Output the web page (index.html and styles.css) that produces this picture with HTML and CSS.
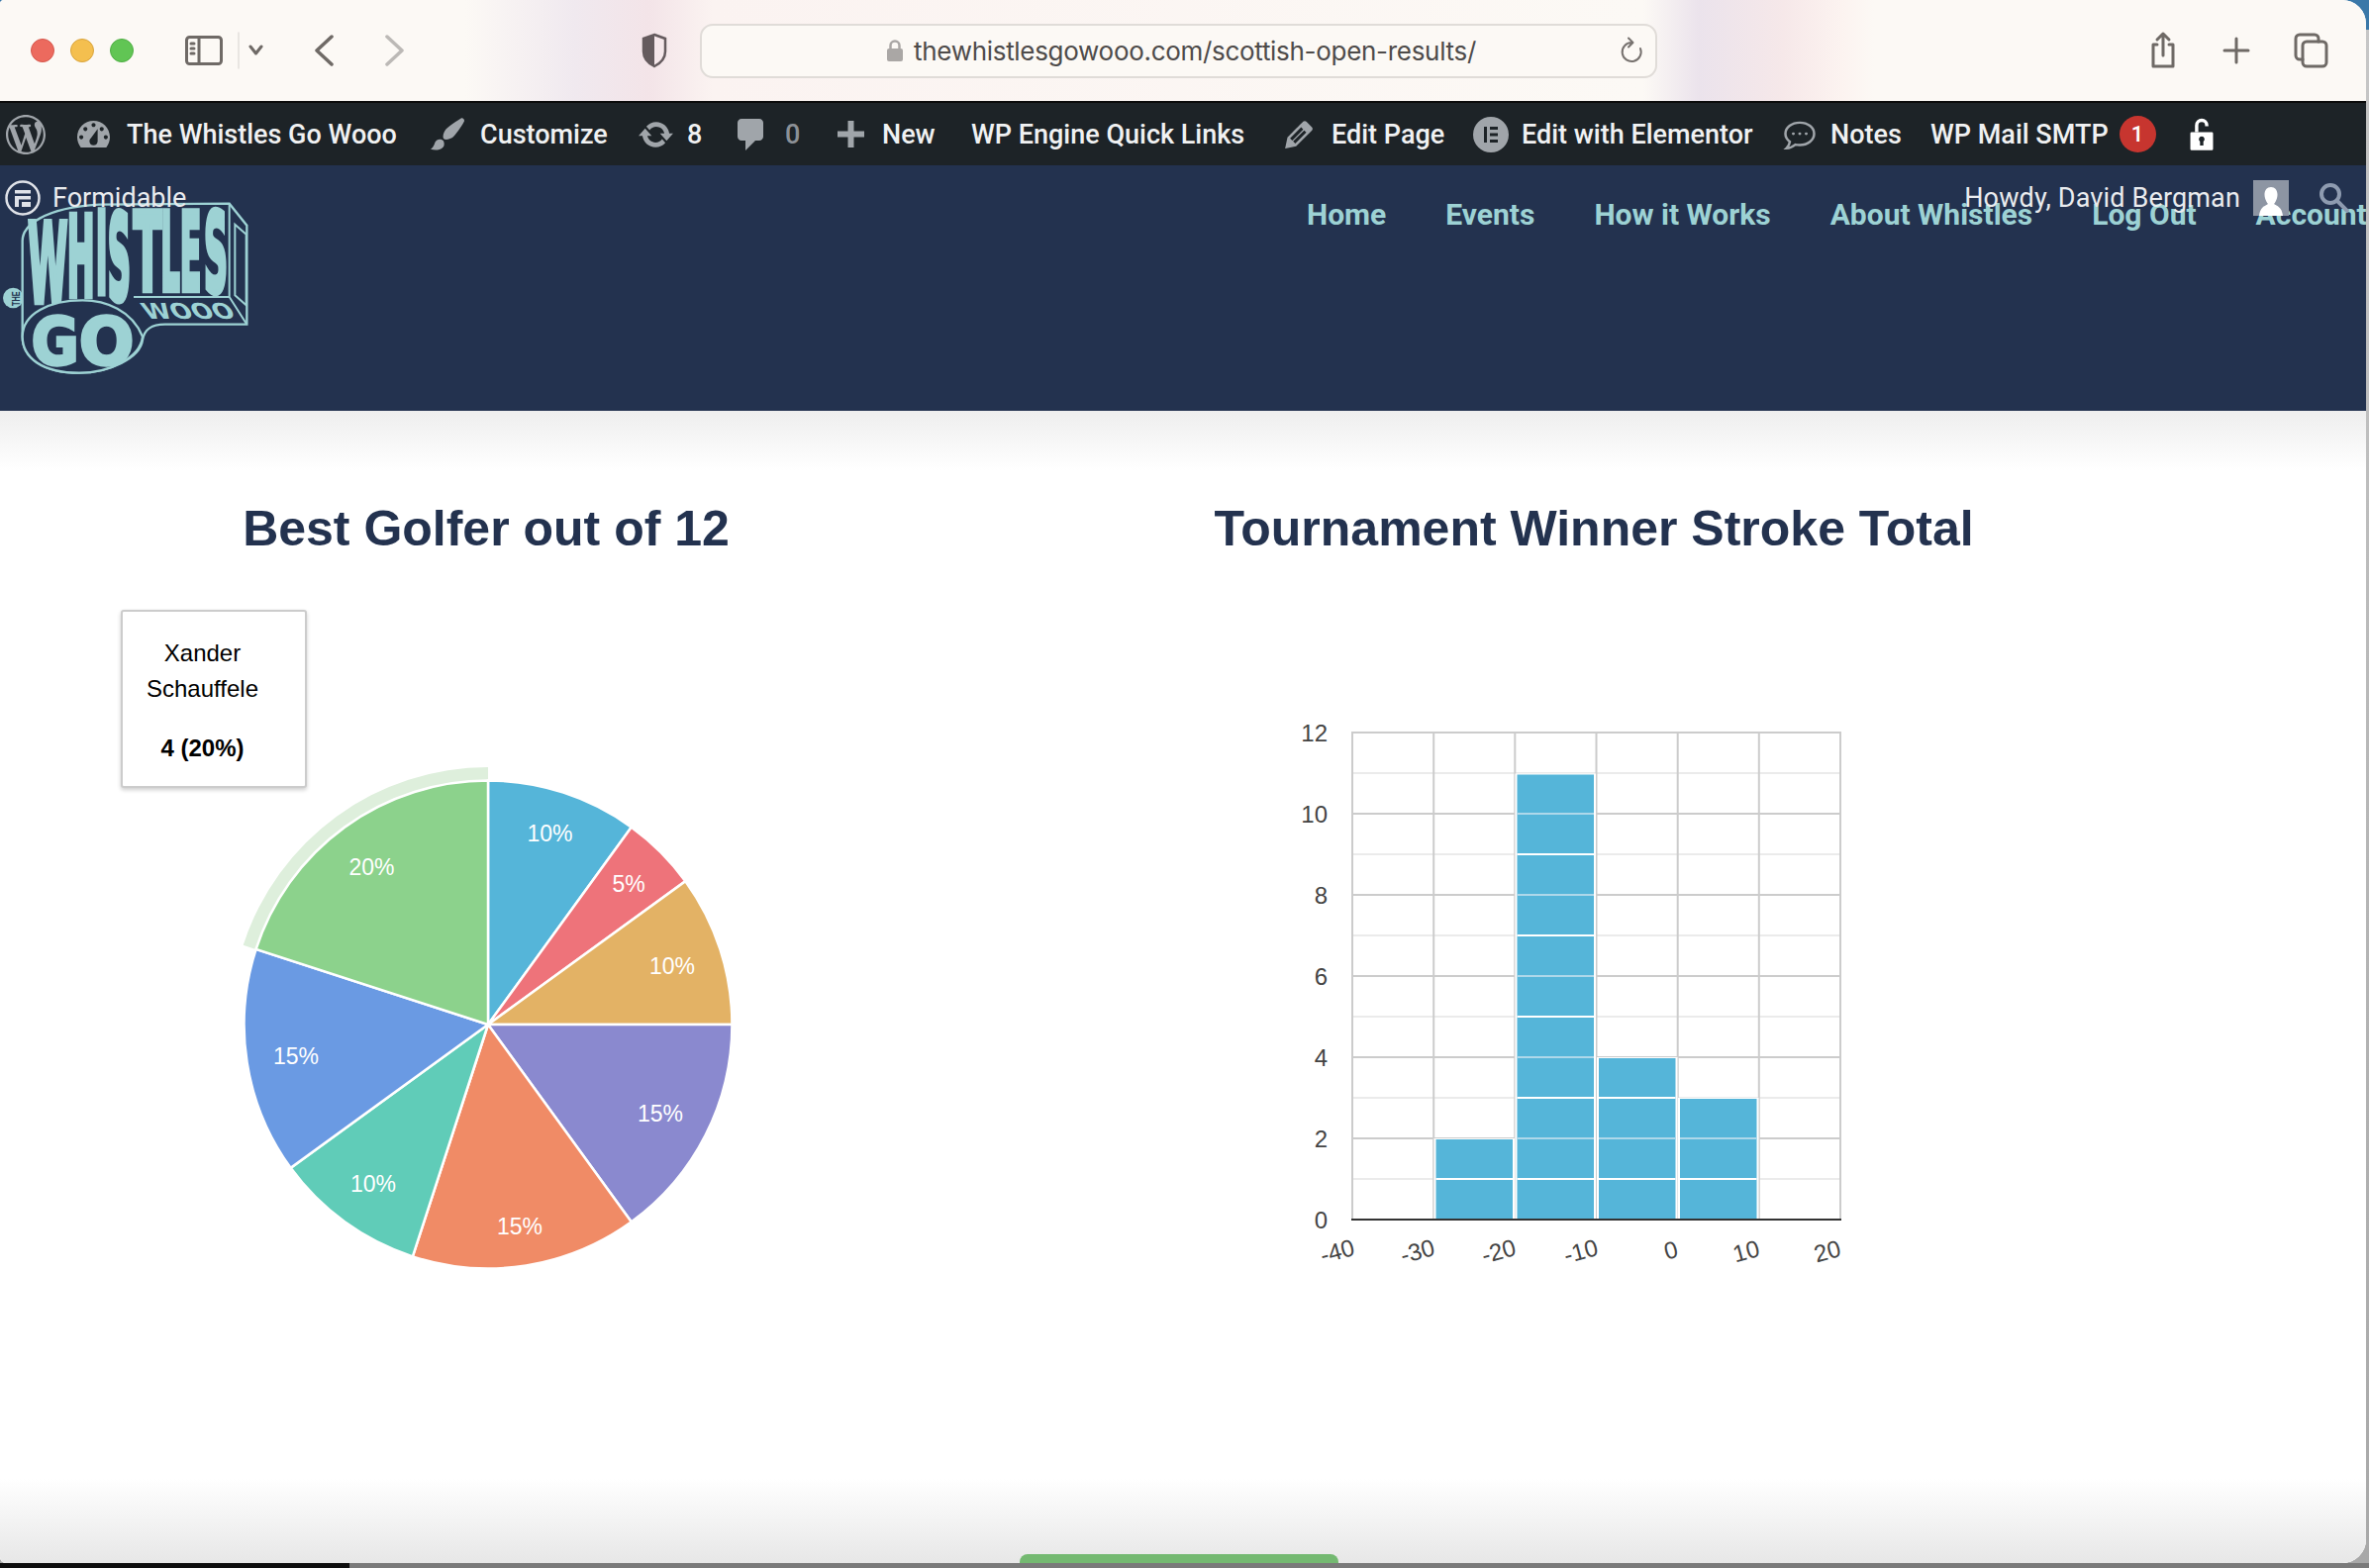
FILE: index.html
```html
<!DOCTYPE html>
<html lang="en">
<head>
<meta charset="utf-8">
<title>Scottish Open Results</title>
<link rel="stylesheet" href="styles.css">
</head>
<body>
<div class="window">
  <div class="browser-bar">
    <div class="lights"><span class="light red"></span><span class="light yellow"></span><span class="light green"></span></div>
    <svg class="tb-icon" width="38" height="30" viewBox="0 0 38 30"><rect x="1.500" y="1.500" width="35" height="27" rx="3"/><path d="M14 1.500v27M6 8h3M6 13h3M6 18h3"/></svg>
    <svg class="tb-icon" width="30" height="40" viewBox="0 0 30 40"><path class="tb-divider" d="M1 2v36"/><path d="M13 16l5.500 7 5.500-7"/></svg>
    <svg class="tb-icon bold" width="20" height="32" viewBox="0 0 20 32"><path d="M18 2L3 16l15 14"/></svg>
    <svg class="tb-icon bold faded" width="20" height="32" viewBox="0 0 20 32"><path d="M2 2l15 14L2 30"/></svg>
    <svg class="shield" width="28" height="36" viewBox="0 0 28 36"><path class="shield-line" d="M14 2l11 4v13c0 7-5 12-11 15C8 31 3 26 3 19V6z"/><path class="shield-fill" d="M14 2v32C8 31 3 26 3 19V6z"/></svg>
    <div class="url-bar">
      <svg class="url-lock" width="18" height="24" viewBox="0 0 18 24"><path class="lock-arc" d="M4.500 11V7a4.500 4.500 0 0 1 9 0v4"/><rect x="1" y="10" width="16" height="13" rx="2"/></svg>
      <span class="url-text">thewhistlesgowooo.com/scottish-open-results/</span>
      <svg class="tb-thin reload" width="24" height="28" viewBox="0 0 24 28"><path d="M20 12a9.500 9.500 0 1 1-9-6M8 1.500l4.500 4.500-4.500 4.500"/></svg>
    </div>
    <svg class="tb-icon" width="32" height="40" viewBox="0 0 32 40"><path d="M10 14H6v22h20V14h-4M16 25V3M10 9l6-6 6 6"/></svg>
    <svg class="tb-icon" width="30" height="30" viewBox="0 0 30 30"><path d="M15 3v24M3 15h24"/></svg>
    <svg class="tb-icon" width="36" height="36" viewBox="0 0 36 36"><rect x="10" y="9" width="24" height="25" rx="4"/><path d="M10 27H7a4 4 0 0 1-4-4V6a4 4 0 0 1 4-4h15a4 4 0 0 1 4 4v3"/></svg>
  </div>

  <nav class="admin-bar">
    <div class="ab-item"><svg class="ab-icon wp" viewBox="0 0 20 20"><path d="M20 10c0-5.510-4.490-10-10-10C4.480 0 0 4.490 0 10c0 5.520 4.480 10 10 10 5.510 0 10-4.480 10-10zM7.780 15.370L4.370 6.220c.55-.02 1.170-.08 1.170-.08.5-.06.44-1.130-.06-1.110 0 0-1.450.11-2.370.11-.18 0-.37 0-.58-.01C4.120 2.690 6.870 1.110 10 1.110c2.330 0 4.450.87 6.050 2.340-.68-.11-1.650.39-1.650 1.580 0 .74.45 1.360.9 2.100.35.61.55 1.360.55 2.460 0 1.490-1.400 5-1.400 5l-3.030-8.370c.54-.02.82-.17.82-.17.5-.05.44-1.250-.06-1.220 0 0-1.440.12-2.380.12-.87 0-2.330-.12-2.330-.12-.5-.03-.56 1.200-.06 1.220l.92.08 1.260 3.410zM17.410 10c.24-.64.74-1.870.43-4.250.7 1.290 1.050 2.710 1.050 4.250 0 3.290-1.730 6.240-4.400 7.780.97-2.590 1.940-5.200 2.920-7.780zM6.100 18.090C3.120 16.650 1.110 13.530 1.110 10c0-1.300.23-2.480.72-3.590C3.250 10.300 4.670 14.200 6.100 18.090zm4.030-6.630l2.580 6.980c-.86.29-1.760.45-2.710.45-.79 0-1.570-.11-2.290-.33.81-2.380 1.620-4.740 2.420-7.100z"/></svg></div>
    <div class="ab-item"><svg class="ab-icon i-dash" viewBox="2 3 16 13"><path fill-rule="evenodd" d="M3.760 16h12.480c1.100-1.370 1.760-3.110 1.760-5 0-4.420-3.580-8-8-8s-8 3.580-8 8c0 1.890.66 3.630 1.760 5zM10 4c.55 0 1 .45 1 1s-.45 1-1 1-1-.45-1-1 .45-1 1-1zM6 6c.55 0 1 .45 1 1s-.45 1-1 1-1-.45-1-1 .45-1 1-1zm8 0c.55 0 1 .45 1 1s-.45 1-1 1-1-.45-1-1 .45-1 1-1zm-5.370 5.550L12 7v6c0 1.100-.9 2-2 2s-2-.9-2-2c0-.57.24-1.080.63-1.450zM4 10c.55 0 1 .45 1 1s-.45 1-1 1-1-.45-1-1 .45-1 1-1zm12 0c.55 0 1 .45 1 1s-.45 1-1 1-1-.45-1-1 .45-1 1-1z"/></svg><span>The Whistles Go Wooo</span></div>
    <div class="ab-item"><svg class="ab-icon i-brush" viewBox="1.400 1.800 17 16.400"><path d="M18.330 3.570s.27-.8-.31-1.360c-.53-.52-1.220-.24-1.220-.24-.61.3-5.760 3.470-7.670 5.570-.86.96-2.060 3.790-1.090 4.820.92.98 3.960-.17 4.790-1 2.060-2.060 5.210-7.170 5.500-7.790zM1.400 17.650c2.370-1.560 1.460-3.410 3.230-4.640.93-.65 2.220-.62 3.080.29.63.67.8 2.570-.16 3.460-1.570 1.450-4 1.550-6.150.89z"/></svg><span>Customize</span></div>
    <div class="ab-item"><svg class="ab-icon i-update" viewBox="0.800 3.200 18.400 13.600"><path d="M10.200 3.280c3.530 0 6.430 2.610 6.920 6h2.080l-3.500 4-3.500-4h2.320c-.45-1.970-2.210-3.440-4.320-3.440-1.450 0-2.730.71-3.540 1.780L4.950 5.660C6.230 4.200 8.110 3.280 10.200 3.280zm-.4 13.440c-3.520 0-6.430-2.610-6.920-6H.8l3.500-4c1.170 1.330 2.330 2.670 3.500 4H5.480c.45 1.970 2.210 3.440 4.320 3.440 1.450 0 2.730-.71 3.540-1.780l1.710 1.950c-1.280 1.460-3.150 2.390-5.250 2.390z"/></svg><span>8</span></div>
    <div class="ab-item"><svg class="ab-icon i-comment" viewBox="3 2 13 16"><path d="M5 2h9c1.100 0 2 .9 2 2v7c0 1.100-.9 2-2 2h-2l-5 5v-5H5c-1.100 0-2-.9-2-2V4c0-1.100.9-2 2-2z"/></svg><span class="muted">0</span></div>
    <div class="ab-item"><svg class="ab-icon i-plus" viewBox="0 0 27 27"><path d="M10.500 0h6v10.500H27v6H16.500V27h-6V16.500H0v-6h10.500z"/></svg><span>New</span></div>
    <div class="ab-item"><span>WP Engine Quick Links</span></div>
    <div class="ab-item"><svg class="ab-icon i-pencil" viewBox="3 2.900 14 14"><path fill-rule="evenodd" d="M13.890 3.390l2.710 2.720c.46.46.42 1.240.03 1.640l-8.010 8.020-5.560 1.160 1.160-5.580s7.600-7.630 7.990-8.030c.39-.39 1.220-.39 1.680.07zm-2.730 2.790l-5.590 5.610 1.110 1.110 5.540-5.650zm-2.970 8.230l5.580-5.600-1.070-1.080-5.590 5.600z"/></svg><span>Edit Page</span></div>
    <div class="ab-item"><svg class="ab-icon i-elementor" viewBox="0 0 36 36"><path fill-rule="evenodd" d="M18 0a18 18 0 1 1 0 36a18 18 0 0 1 0-36zM11 10v16h3V10zM17 10v3h8v-3zM17 16.500v3h8v-3zM17 23v3h8v-3z"/></svg><span>Edit with Elementor</span></div>
    <div class="ab-item"><svg class="ab-line" viewBox="0 0 34 32" preserveAspectRatio="none"><path d="M17 3C9 3 2.500 8 2.500 15c0 3.500 1.700 6.500 4.500 8.700-.3 2.500-1.500 5-3.500 7 3.500-.3 6.800-2 9-4 1.400.3 2.900.5 4.500.5 8 0 14.500-5.200 14.500-12.200S25 3 17 3z"/><circle class="dot" cx="10.500" cy="15" r="1.500"/><circle class="dot" cx="17" cy="15" r="1.500"/><circle class="dot" cx="23.500" cy="15" r="1.500"/></svg><span>Notes</span></div>
    <div class="ab-item"><span>WP Mail SMTP</span><span class="badge">1</span></div>
    <div class="ab-item"><svg class="ab-lock" viewBox="0 0 28 40"><path class="shackle" d="M8 17V9a6 6 0 0 1 12 0v1"/><path fill-rule="evenodd" d="M2 17h24a1.500 1.500 0 0 1 1.500 1.500V37a1.500 1.500 0 0 1-1.500 1.500H2A1.500 1.500 0 0 1 .5 37V18.500A1.500 1.500 0 0 1 2 17zM14 22a3.500 3.500 0 0 0-2 6.300V33h4v-4.700A3.500 3.500 0 0 0 14 22z"/></svg></div>
  </nav>

  <header class="site-header">
    <svg class="logo" width="300" height="240" viewBox="0 0 900 720">
      <circle class="logo-solid" cx="40" cy="408" r="31"/>
      <text class="logo-the" transform="translate(60 432) rotate(-90) scale(1 1.5)">THE</text>
      <path class="logo-frame" d="M68 465V235C68 190 130 135 300 125L695 122L748 188V488H500C455 488 437 505 432 535C425 590 330 635 240 635C130 635 68 590 68 525Z"/>
      <g class="logo-letters">
        <text transform="translate(85 419) scale(1.09 3.33)">W</text>
        <text transform="translate(203 401) scale(1 3.36)">H</text>
        <text transform="translate(290 394) scale(.95 3.4)">I</text>
        <text transform="translate(326 411) scale(.97 3.6)">S</text>
        <text transform="translate(404 384) scale(1.25 3.26)">T</text>
        <text transform="translate(487 384) scale(.92 3.26)">L</text>
        <text transform="translate(545 384) scale(.95 3.26)">E</text>
        <text transform="translate(618 387) scale(1 3.3)">S</text>
      </g>
      <path class="logo-detail" d="M695 122V405H405M695 405L748 488M712 185L746 215V430L712 400Z"/>
      <path class="logo-oval" d="M68 525C68 455 150 415 250 415C320 415 400 445 432 525C425 590 330 635 240 635C130 635 68 590 68 525Z"/>
      <g class="logo-heavy">
        <text transform="translate(95 610) scale(1.75 2)">G</text>
        <text transform="translate(240 610) scale(1.95 2)">O</text>
      </g>
      <text class="logo-wooo" transform="matrix(2.5 0 1.1 2.2 445 470)">WOOO</text>
    </svg>
    <div class="site-nav">
      <a>Home</a><a>Events</a><a>How it Works</a><a>About Whistles</a><a>Log Out</a><a>Account</a>
    </div>
    <div class="ab-left">
      <svg class="formidable-icon" width="36" height="36" viewBox="0 0 36 36"><circle cx="18" cy="18" r="16.500"/><path class="f-mark" d="M10 10h16v3.500H10zM10 16h16v3.500H14V27h-4zM17 22h9v5h-9z"/></svg>
      <span>Formidable</span>
    </div>
    <div class="ab-right">
      <span>Howdy, David Bergman</span>
      <svg class="avatar" width="36" height="36" viewBox="0 0 36 36"><rect width="36" height="36"/><path class="avatar-person" d="M18 7c4 0 6.500 3 6.500 7.500S22 23 21 24c3 2 8 3 9 12H6c1-9 6-10 9-12-1-1-3.500-5-3.500-9.500S14 7 18 7z"/></svg>
      <svg class="search" width="30" height="30" viewBox="0 0 30 30"><circle cx="11" cy="11" r="9"/><path d="M17.500 17.500L29 29"/></svg>
    </div>
  </header>

  <main class="content">
    <section class="chart-col pie-col">
      <h2>Best Golfer out of 12</h2>
      <svg class="chart-svg" width="982" height="700" viewBox="0 600 982 700">
        <path class="ring" d="M493 775A260 260 0 0 0 245.700 954.700L258 958.900A246 246 0 0 1 493 789Z"/>
        <g class="slices" transform="translate(493 1035) scale(1.006) translate(-493 -1035)">
          <path class="s1" d="M493 1035V790A245 245 0 0 1 637 836.800Z"/>
          <path class="s2" d="M493 1035L637 836.800A245 245 0 0 1 691.200 891Z"/>
          <path class="s3" d="M493 1035L691.200 891A245 245 0 0 1 738 1035Z"/>
          <path class="s4" d="M493 1035H738A245 245 0 0 1 637 1233.200Z"/>
          <path class="s5" d="M493 1035L637 1233.200A245 245 0 0 1 417.300 1268Z"/>
          <path class="s6" d="M493 1035L417.300 1268A245 245 0 0 1 294.800 1179Z"/>
          <path class="s7" d="M493 1035L294.800 1179A245 245 0 0 1 260 959.300Z"/>
          <path class="s8" d="M493 1035L260 959.300A245 245 0 0 1 493 790Z"/>
        </g>
        <g class="pie-labels">
          <text x="555.500" y="850">10%</text>
          <text x="635" y="901">5%</text>
          <text x="679" y="984">10%</text>
          <text x="667" y="1133">15%</text>
          <text x="525" y="1247">15%</text>
          <text x="377" y="1204">10%</text>
          <text x="299" y="1075">15%</text>
          <text x="375.500" y="884">20%</text>
        </g>
      </svg>
      <div class="tooltip">
        <div>Xander Schauffele</div>
        <div class="tooltip-value">4 (20%)</div>
      </div>
    </section>
    <section class="chart-col hist-col">
      <h2>Tournament Winner Stroke Total</h2>
      <svg class="chart-svg" width="978" height="700" viewBox="1121 600 978 700">
        <defs>
          <clipPath id="bars">
            <rect x="1450.500" y="1151" width="77.500" height="80"/>
            <rect x="1532.500" y="782.500" width="77.500" height="448.500"/>
            <rect x="1615" y="1069" width="77.500" height="162"/>
            <rect x="1697" y="1110" width="77.500" height="121"/>
          </clipPath>
        </defs>
        <path class="grid-minor" d="M1366 781H1859M1366 863H1859M1366 945H1859M1366 1027H1859M1366 1109H1859M1366 1191H1859"/>
        <path class="grid-major" d="M1366 740H1859M1366 822H1859M1366 904H1859M1366 986H1859M1366 1068H1859M1366 1150H1859M1366 739V1232M1448.200 739V1232M1530.300 739V1232M1612.500 739V1232M1694.700 739V1232M1776.800 739V1232M1859 739V1232"/>
        <g class="bars">
          <rect x="1448.500" y="1150" width="81.500" height="82"/>
          <rect x="1530.500" y="781.500" width="81.500" height="450.500"/>
          <rect x="1613" y="1068" width="81.500" height="164"/>
          <rect x="1695" y="1109" width="81.500" height="123"/>
        </g>
        <g class="bar-fill" clip-path="url(#bars)">
          <rect x="1440" y="770" width="360" height="470"/>
          <path class="bar-major" d="M1440 822H1800M1440 904H1800M1440 986H1800M1440 1068H1800M1440 1150H1800"/>
          <path class="bar-minor" d="M1440 863H1800M1440 945H1800M1440 1027H1800M1440 1109H1800M1440 1191H1800"/>
        </g>
        <path class="baseline" d="M1365 1232H1860"/>
        <g class="y-labels">
          <text x="1341" y="749">12</text>
          <text x="1341" y="831">10</text>
          <text x="1341" y="913">8</text>
          <text x="1341" y="995">6</text>
          <text x="1341" y="1077">4</text>
          <text x="1341" y="1159">2</text>
          <text x="1341" y="1241">0</text>
        </g>
        <g class="x-labels">
          <text transform="translate(1353 1272) rotate(-15)">-40</text>
          <text transform="translate(1434 1272) rotate(-15)">-30</text>
          <text transform="translate(1516 1272) rotate(-15)">-20</text>
          <text transform="translate(1599 1272) rotate(-15)">-10</text>
          <text transform="translate(1690 1271) rotate(-15)">0</text>
          <text transform="translate(1766 1272) rotate(-15)">10</text>
          <text transform="translate(1848 1272) rotate(-15)">20</text>
        </g>
      </svg>
    </section>
    <div class="green-tab"></div>
  </main>
</div>
<div class="dock-strip"><div class="dock-black"></div></div>
</body>
</html>
```
FILE: styles.css
```css
* { box-sizing: border-box; }
html, body { margin: 0; padding: 0; }
body {
  width: 2393px;
  height: 1584px;
  overflow: hidden;
  font-family: "Liberation Sans", Arial, sans-serif;
  background: linear-gradient(#3a78a8 0, #3a78a8 30px, #c6c6c6 30px, #a8a8a8 1579px);
}
.window {
  width: 2390px;
  height: 1579px;
  display: flex;
  flex-direction: column;
  overflow: hidden;
  border-radius: 4px 24px 24px 6px;
  background: #fff;
}

/* browser chrome */
.browser-bar {
  flex: 0 0 104px;
  display: grid;
  grid-template-columns: 156px 53px 77px 72px 258px 60px 1462px 75px 72px auto;
  align-items: center;
  padding-left: 31px;
  border-bottom: 2px solid #0b0b0b;
  background: linear-gradient(90deg, #fcf9f5 0, #fcf9f5 470px, #f0e9ef 580px, #f3e4e8 655px, #fbf3f1 720px, #fcf9f5 1660px, #ebe3ec 1716px, #f6e8e9 1802px, #fcf3f0 1860px, #fcf9f5 1893px);
}
.lights { display: flex; gap: 16px; }
.light { width: 24px; height: 24px; border-radius: 50%; }
.red { background: #ec6a5e; border: 1px solid #d6574c; }
.yellow { background: #f4bf4f; border: 1px solid #d9a43c; }
.green { background: #61c554; border: 1px solid #4fae44; }
.tb-icon, .tb-thin { fill: none; stroke: #6f6a66; stroke-width: 3; stroke-linecap: round; stroke-linejoin: round; }
.tb-icon.bold { stroke-width: 3.500; }
.tb-icon.faded { stroke: #bcb9b6; }
.tb-divider { stroke: #e3dfdb; stroke-width: 1.500; }
.shield-line { fill: none; stroke: #655b5e; stroke-width: 2.500; }
.shield-fill { fill: #655b5e; }
.url-bar {
  height: 55px;
  width: 967px;
  display: flex;
  align-items: center;
  gap: 10px;
  padding: 0 11px 0 186px;
  border: 2px solid #e0dcd8;
  border-radius: 13px;
  background: #fcf9f5;
}
.url-lock rect { fill: #aaa7a5; }
.lock-arc { fill: none; stroke: #aaa7a5; stroke-width: 2.500; }
.url-text { font: 26px Inter, "Liberation Sans", sans-serif; color: #4e4b4a; letter-spacing: -0.3px; white-space: nowrap; }
.reload { margin-left: auto; stroke-width: 2; stroke: #77726f; }

/* WordPress admin bar */
.admin-bar {
  flex: 0 0 63px;
  display: grid;
  grid-template-columns: 72px 357px 210px 100px 101px 135px 317px 190px 313px 149px 262px auto;
  align-items: center;
  padding-left: 6px;
  background: #1d2327;
  color: #f0f1f2;
  font: 500 27px Roboto, "Liberation Sans", sans-serif;
}
.ab-item { display: flex; align-items: center; white-space: nowrap; }
.ab-icon { fill: #a0a5aa; flex: none; }
.ab-icon.wp { width: 40px; height: 40px; }
.i-dash { width: 33px; height: 27px; margin-right: 17px; }
.i-brush { width: 34px; height: 33px; margin-right: 16px; }
.i-update { width: 35px; height: 26px; margin-right: 14px; }
.i-comment { width: 26px; height: 32px; margin-right: 22px; }
.i-plus { width: 27px; height: 27px; margin-right: 18px; }
.i-pencil { width: 28px; height: 28px; margin-right: 19px; }
.i-elementor { width: 36px; height: 36px; margin-right: 13px; }
.ab-line { width: 34px; height: 30px; margin-right: 14px; fill: none; stroke: #a0a5aa; stroke-width: 2.500; flex: none; }
.dot { fill: #a0a5aa; stroke: none; }
.muted { color: #8c9197; }
.badge {
  width: 37px;
  height: 37px;
  margin-left: 11px;
  border-radius: 50%;
  background: #c7352f;
  color: #fff;
  font-size: 22px;
  display: flex;
  align-items: center;
  justify-content: center;
}
.ab-lock { width: 24px; height: 34px; fill: #fff; }
.shackle { fill: none; stroke: #fff; stroke-width: 4; }

/* site header */
.site-header {
  flex: 0 0 248px;
  position: relative;
  display: grid;
  grid-template-columns: 1320px 1fr;
  background: #23324f;
  overflow: hidden;
}
.logo { margin-top: -2px; display: block; }
.logo-solid { fill: #9dd2d4; }
.logo-the { fill: #23324f; font: 700 22px "Liberation Sans", sans-serif; }
.logo-frame { fill: #23324f; stroke: #9dd2d4; stroke-width: 7; }
.logo-letters text { fill: #9dd2d4; stroke: #9dd2d4; stroke-width: 6; font: 700 100px "DejaVu Sans", sans-serif; }
.logo-detail { fill: none; stroke: #9dd2d4; stroke-width: 6; }
.logo-oval { fill: #23324f; stroke: #9dd2d4; stroke-width: 7; }
.logo-heavy text { fill: #9dd2d4; stroke: #9dd2d4; stroke-width: 5; font: 700 100px "DejaVu Sans", sans-serif; }
.logo-wooo { fill: #9dd2d4; font: 700 30px "DejaVu Sans", sans-serif; }
.site-nav {
  display: flex;
  gap: 60px;
  padding-top: 32px;
  color: #9dd2d4;
  font: 700 30px Roboto, "Liberation Sans", sans-serif;
  white-space: nowrap;
}
.ab-left, .ab-right {
  position: absolute;
  display: flex;
  align-items: center;
  color: #e9ebee;
  font: 27px Roboto, "Liberation Sans", sans-serif;
  white-space: nowrap;
}
.ab-left { left: 5px; top: 15px; gap: 12px; }
.ab-right { right: 17px; top: 15px; letter-spacing: .15px; }
.ab-right span { margin-right: 13px; }
.formidable-icon circle { fill: none; stroke: #dfe2e8; stroke-width: 2.500; }
.f-mark { fill: #dfe2e8; }
.avatar { margin-right: 31px; }
.avatar rect { fill: #8d95a3; }
.avatar-person { fill: #fff; }
.search { fill: none; stroke: #8e9bb0; stroke-width: 4; }

/* content */
.content {
  flex: 1;
  position: relative;
  display: grid;
  grid-template-columns: 982px 978px;
  column-gap: 139px;
  align-content: start;
  padding-top: 89px;
  background:
    linear-gradient(#eeeeee, rgba(255,255,255,0)) 0 0 / 100% 60px no-repeat,
    linear-gradient(rgba(255,255,255,0), #e7e7e7) 0 100% / 100% 85px no-repeat,
    #fff;
}
.chart-col { position: relative; }
.chart-col h2 {
  margin: 0;
  height: 96px;
  line-height: 60px;
  font-size: 50px;
  font-weight: 700;
  text-align: center;
  color: #23324f;
}
.chart-svg { display: block; }
.ring { fill: #deefdc; }
.slices path { stroke: #fff; stroke-width: 2.500; stroke-linejoin: miter; }
.s1 { fill: #55b5d9; }
.s2 { fill: #ee737a; }
.s3 { fill: #e3b265; }
.s4 { fill: #8a89cf; }
.s5 { fill: #f08b66; }
.s6 { fill: #60ccb8; }
.s7 { fill: #6a9ae3; }
.s8 { fill: #8cd28c; }
.pie-labels text { fill: #fff; font-size: 23px; text-anchor: middle; }
.tooltip {
  position: absolute;
  left: 122px;
  top: 112px;
  width: 188px;
  height: 180px;
  padding: 24px 34px 0 11px;
  text-align: center;
  font-size: 24px;
  line-height: 36px;
  color: #000;
  background: #fff;
  border: 2px solid #ccc;
  border-radius: 3px;
  box-shadow: 0 2px 4px rgba(0,0,0,.2);
}
.tooltip-value { margin-top: 24px; font-weight: 700; }
.grid-minor { stroke: #ebebeb; stroke-width: 2; fill: none; }
.grid-major { stroke: #cccccc; stroke-width: 2; fill: none; }
.bars rect { fill: #fff; }
.bar-fill rect { fill: #55b5d9; }
.bar-major { stroke: #aed8ea; stroke-width: 2; fill: none; }
.bar-minor { stroke: #ffffff; stroke-width: 2; fill: none; }
.baseline { stroke: #333; stroke-width: 2; fill: none; }
.y-labels text { fill: #444; font-size: 24px; text-anchor: end; }
.x-labels text { fill: #444; font-size: 24px; text-anchor: middle; }
.green-tab {
  position: absolute;
  left: 1030px;
  bottom: 0;
  width: 322px;
  height: 9px;
  border-radius: 8px 8px 0 0;
  background: #74b971;
}
.dock-strip {
  height: 5px;
  background: #7a7a7a;
}
.dock-black { width: 353px; height: 5px; background: #0e0e0e; }
```
